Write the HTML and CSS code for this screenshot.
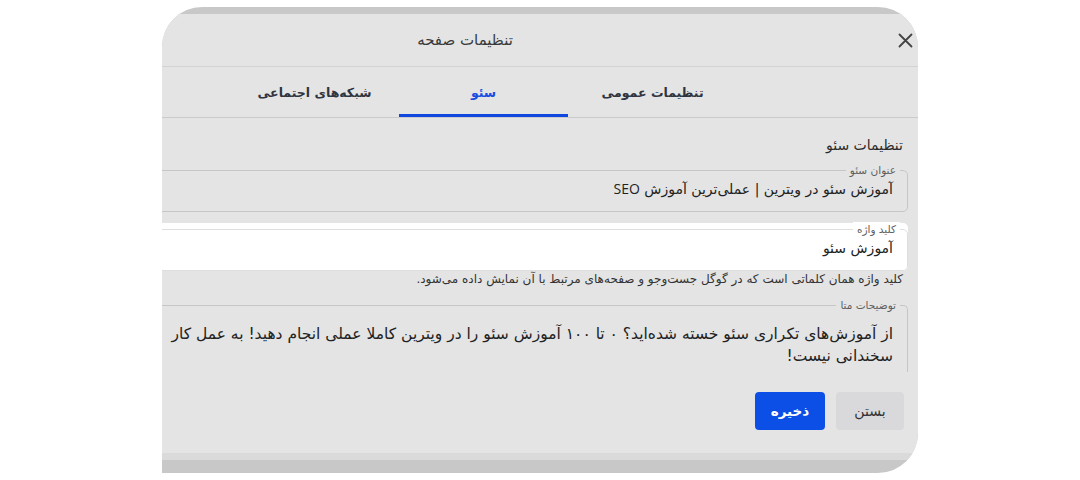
FILE: index.html
```html
<!DOCTYPE html>
<html lang="fa">
<head>
<meta charset="utf-8">
<title>تنظیمات صفحه</title>
<link rel="stylesheet" href="styles.css">
</head>
<body>
<div class="frame" dir="rtl">
  <div class="modal">
    <header class="head">
      <button class="close" aria-label="بستن">
        <svg width="15" height="15" viewBox="0 0 15 15"><path d="M1.5 1.5 L13.5 13.5 M13.5 1.5 L1.5 13.5" stroke="#444" stroke-width="1.8" stroke-linecap="round" fill="none"/></svg>
      </button>
      <h1 class="title">تنظیمات صفحه</h1>
      <span class="spacer"></span>
    </header>
    <nav class="tabs">
      <div class="tab">تنظیمات عمومی</div>
      <div class="tab active">سئو</div>
      <div class="tab">شبکه‌های اجتماعی</div>
    </nav>
    <div class="body">
      <h2 class="section">تنظیمات سئو</h2>
      <div class="field">
        <div class="box">
          <span class="label">عنوان سئو</span>
          <div class="value">آموزش سئو در ویترین | عملی‌ترین آموزش <span class="latin">SEO</span></div>
        </div>
      </div>
      <div class="field focused">
        <div class="box">
          <span class="label">کلید واژه</span>
          <div class="value">آموزش سئو</div>
        </div>
      </div>
      <p class="helper">کلید واژه همان کلماتی است که در گوگل جست‌وجو و صفحه‌های مرتبط با آن نمایش داده می‌شود.</p>
      <div class="field meta">
        <div class="box">
          <span class="label">توضیحات متا</span>
          <div class="value">از آموزش‌های تکراری سئو خسته شده‌اید؟ ۰ تا ۱۰۰ آموزش سئو را در ویترین کاملا عملی انجام دهید! به عمل کار<br>سخندانی نیست!</div>
        </div>
      </div>
    </div>
    <footer class="actions">
      <button class="btn ghost">بستن</button>
      <button class="btn primary">ذخیره</button>
    </footer>
  </div>
  <div class="shade"></div>
</div>
</body>
</html>
```

FILE: styles.css
```css
html, body {
  margin: 0;
  padding: 0;
  background: #ffffff;
}

body {
  font-family: "DejaVu Sans", "Noto Sans", sans-serif;
  color: #2b2b2b;
}

.frame {
  margin: 7px 0 0 162px;
  width: 756px;
  height: 466px;
  padding-top: 7px;
  box-sizing: border-box;
  background: #c8c8c8;
  border-radius: 40px 40px 40px 0;
  overflow: hidden;
  direction: rtl;
}

.modal {
  width: 906px;
  background: #e4e4e4;
}

.head {
  height: 52px;
  border-bottom: 1px solid #d3d3d3;
  display: grid;
  grid-template-columns: 1fr auto 1fr;
  align-items: center;
}

.close {
  justify-self: start;
  width: 26px;
  height: 26px;
  padding: 0;
  margin: 0;
  border: 0;
  background: transparent;
  display: flex;
  align-items: center;
  justify-content: center;
}

.title {
  margin: 0;
  font-size: 15px;
  font-weight: normal;
  color: #3a3a3a;
  line-height: 20px;
}

.tabs {
  display: flex;
  padding-right: 181px;
  border-bottom: 1px solid #cbcbcb;
}

.tab {
  width: 169px;
  height: 50px;
  display: flex;
  align-items: center;
  justify-content: center;
  font-size: 12.5px;
  font-weight: bold;
  color: #2e3440;
}

.tab.active {
  color: #1a4ddf;
  box-shadow: inset 0 -3px 0 #0f47e0;
}

.body {
  padding: 15px 10px 0 0;
}

.section {
  margin: 0 5px 7px 0;
  font-size: 14px;
  font-weight: normal;
  line-height: 24px;
  color: #2b2b2b;
}

.field {
  padding-top: 6px;
  border-radius: 5px;
  background: #e4e4e4;
}

.field + .field {
  margin-top: 11px;
}

.field.focused {
  background: #ffffff;
}

.box {
  position: relative;
  border: 1px solid #c6c6c6;
  border-radius: 5px;
  padding: 6px 14px 10px 14px;
}

.focused .box {
  border-color: #dedede;
}

.label {
  position: absolute;
  top: -8px;
  right: 7px;
  padding: 0 4px;
  font-size: 10.5px;
  line-height: 14px;
  color: #5f5f5f;
  background: #e4e4e4;
}

.focused .label {
  background: #ffffff;
}

.value {
  font-size: 14px;
  line-height: 24px;
  color: #222;
  white-space: nowrap;
}

.latin {
  font-family: "Open Sans", "Liberation Sans", sans-serif;
}

.helper {
  margin: 0 5px 0 0;
  font-size: 12px;
  line-height: 16px;
  color: #333;
}

.field.meta {
  margin-top: 12px;
}

.meta .box {
  border-bottom: 0;
  border-left: 0;
  border-radius: 0 5px 0 0;
  padding: 17px 14px 5px 14px;
}

.meta .value {
  font-size: 15.5px;
  line-height: 22px;
}

.actions {
  display: flex;
  gap: 11px;
  padding: 20px 14px 23px 0;
}

.btn {
  height: 38px;
  border: 0;
  border-radius: 4px;
  font-family: "DejaVu Sans", "Noto Sans", sans-serif;
  font-size: 14px;
  padding: 0;
}

.btn.ghost {
  width: 68px;
  background: #d9d9db;
  color: #333;
}

.btn.primary {
  width: 70px;
  background: #0b4fe6;
  color: #ffffff;
  font-weight: bold;
  font-size: 13.5px;
}

.shade {
  height: 7px;
  background: #dadada;
}
```
